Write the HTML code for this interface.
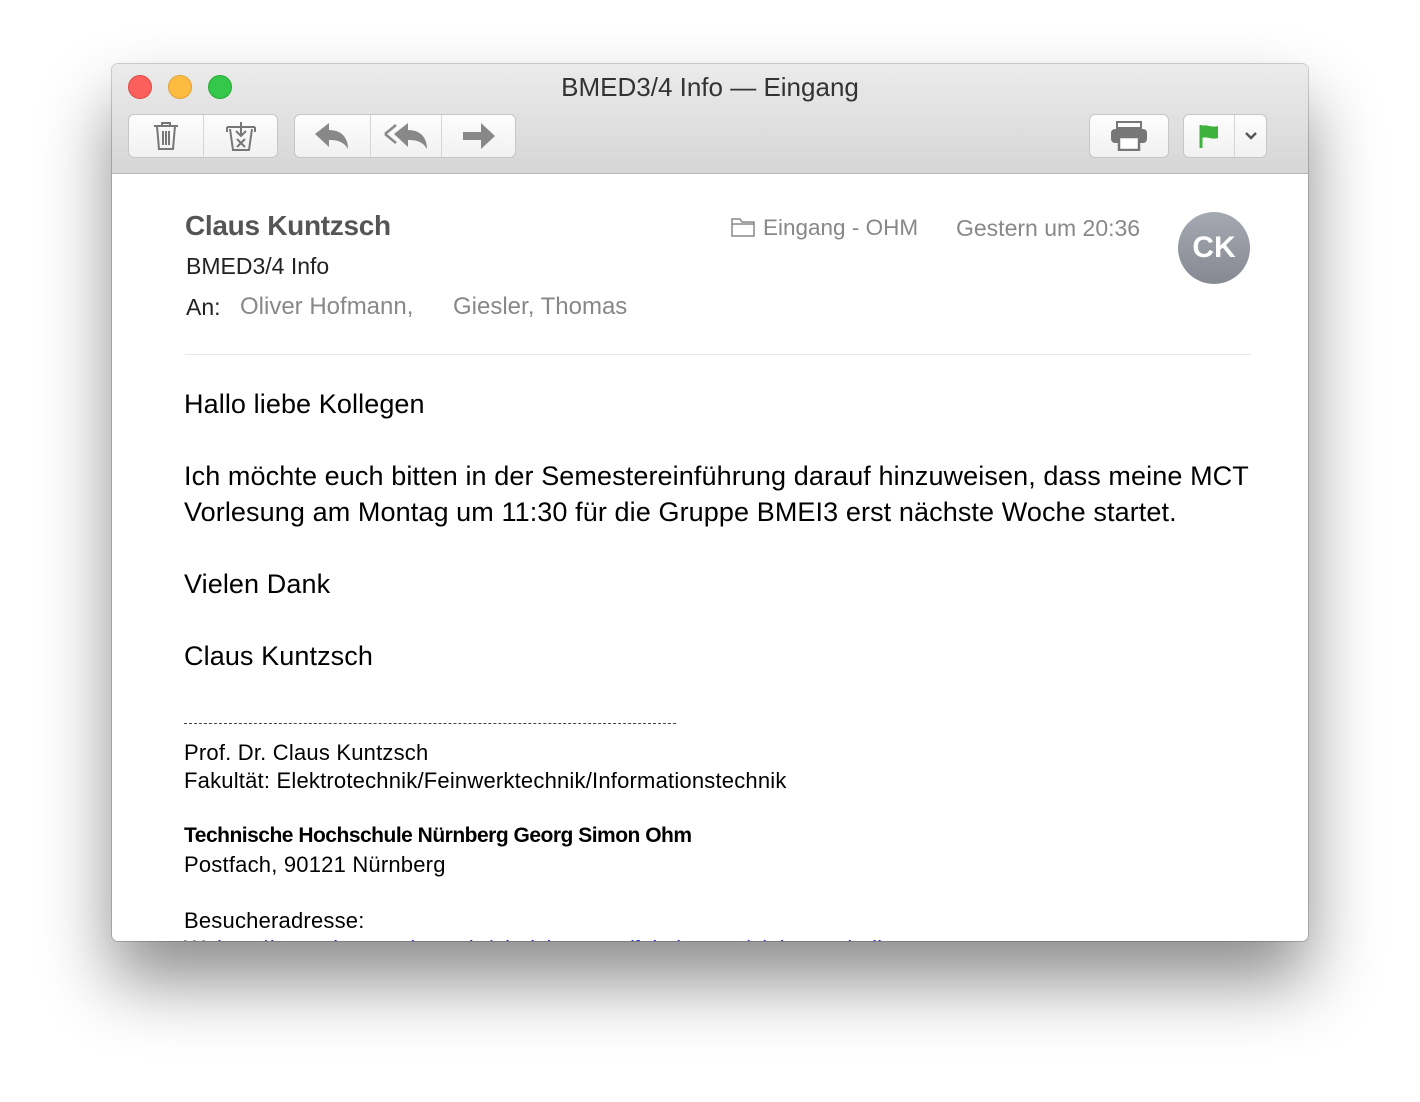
<!DOCTYPE html><html><head><meta charset="utf-8"><style>
body{margin:0;width:1420px;height:1102px;background:#fff;position:relative;overflow:hidden;font-family:"Liberation Sans",sans-serif}
.win{position:absolute;left:112px;top:64px;width:1196px;height:877px;border-radius:6px;overflow:hidden;background:#fff;box-shadow:0 40px 70px rgba(0,0,0,.45),0 0 0 1px rgba(0,0,0,.18)}
.tb{position:absolute;left:0;top:0;width:100%;height:109px;background:linear-gradient(#ebebeb,#d6d6d6);border-bottom:1px solid #b8b8b8}
.dot{position:absolute;top:11px;width:24px;height:24px;border-radius:50%}
.title{position:absolute;top:8px;left:0;width:100%;text-align:center;font-size:26px;color:#333;padding-left:0}
.grp{position:absolute;top:50px;height:44px;background:linear-gradient(#fdfdfd,#f1f1f1);border:1px solid #c6c6c6;border-radius:6px;display:flex;box-sizing:border-box}
.grp div{height:100%;display:flex;align-items:center;justify-content:center;border-right:1px solid #d6d6d6}
.grp div:last-child{border-right:none}
.t{position:absolute;white-space:nowrap}
.body{font-size:27px;color:#000;letter-spacing:0.1px}
.sig{font-size:22px;color:#000;letter-spacing:0.2px}
</style></head><body>
<div class="win">
<div class="tb">
<div class="dot" style="left:16px;background:#fc605c;border:1px solid #de4a45;box-sizing:border-box"></div>
<div class="dot" style="left:56px;background:#fdbc40;border:1px solid #dea236;box-sizing:border-box"></div>
<div class="dot" style="left:96px;background:#34c84a;border:1px solid #27aa35;box-sizing:border-box"></div>
<div class="title">BMED3/4 Info — Eingang</div>
<div class="grp" style="left:16px;width:150px"><div style="width:76px"><svg width="26" height="30" viewBox="0 0 26 30" fill="none" stroke="#777" stroke-width="2"><path d="M1 5h24M9 5V2h8v3M4 5l2 23h14l2-23M10 10v14M13 10v14M16 10v14"/></svg></div><div style="width:74px"><svg width="32" height="32" viewBox="0 0 32 32" fill="none" stroke="#777" stroke-width="2"><path d="M2 7h28M2 7v5M30 7v5M5 9l3 21h16l3-21M16 2v14M11 11l5 5 5-5M12 19l8 8M20 19l-8 8"/></svg></div></div>
<div class="grp" style="left:182px;width:222px"><div style="width:76px"><svg width="34" height="28" viewBox="0 0 34 28"><path d="M0 12L14 1v7c12 0 19 7 19 19c-4-7-10-9-19-9v7z" fill="#888"/></svg></div><div style="width:72px"><svg width="44" height="28" viewBox="0 0 44 28"><path d="M1 12L12 3" stroke="#888" stroke-width="2.5" fill="none"/><path d="M1 12L12 21" stroke="#888" stroke-width="2.5" fill="none"/><path d="M10 12L24 1v7c12 0 19 7 19 19c-4-7-10-9-19-9v7z" fill="#888"/></svg></div><div style="width:74px"><svg width="32" height="26" viewBox="0 0 32 26"><path d="M0 9h18V0l14 13-14 13v-9H0z" fill="#888"/></svg></div></div>
<div class="grp" style="left:977px;width:80px"><div style="width:80px"><svg width="38" height="30" viewBox="0 0 38 30"><rect x="7" y="1" width="24" height="6" fill="none" stroke="#777" stroke-width="2"/><rect x="1" y="8" width="36" height="14" rx="4" fill="#777"/><rect x="9" y="16" width="20" height="13" fill="#fff" stroke="#777" stroke-width="2.5"/></svg></div></div>
<div class="grp" style="left:1071px;width:84px"><div style="width:52px"><svg width="20" height="24" viewBox="0 0 20 24"><path d="M2 1v23" stroke="#3db33d" stroke-width="3"/><path d="M3 2c5-2 9 2 16 0v12c-7 2-11-2-16 0z" fill="#3db33d"/></svg></div><div style="width:32px"><svg width="14" height="10" viewBox="0 0 14 10"><path d="M2 2l5 5 5-5" stroke="#555" stroke-width="2.5" fill="none"/></svg></div></div>
</div>
<div class="t" style="left:73px;top:146px;font-size:28px;font-weight:bold;color:#555;letter-spacing:-0.3px">Claus Kuntzsch</div>
<div class="t" style="left:74px;top:189px;font-size:23px;color:#222">BMED3/4 Info</div>
<div class="t" style="left:74px;top:230px;font-size:23px;color:#222">An:</div>
<div class="t" style="left:128px;top:229px;font-size:24px;color:#888">Oliver Hofmann,</div>
<div class="t" style="left:341px;top:229px;font-size:24px;color:#888">Giesler, Thomas</div>
<svg class="t" style="left:619px;top:153px" width="24" height="20" viewBox="0 0 24 20" fill="none" stroke="#888" stroke-width="1.5"><path d="M1 2h8l2 3h12v14H1z M1 7h22"/></svg>
<div class="t" style="left:651px;top:151px;font-size:22.5px;color:#888">Eingang - OHM</div>
<div class="t" style="left:844px;top:151px;font-size:23px;color:#888">Gestern um 20:36</div>
<div class="t" style="left:1066px;top:148px;width:72px;height:72px;border-radius:50%;background:linear-gradient(#a6a9b1,#868992);color:#fff;font-size:30px;font-weight:bold;display:flex;align-items:center;justify-content:center">CK</div>
<div class="t" style="left:73px;top:290px;width:1066px;height:1px;background:#e6e6e6"></div>
<div class="t body" style="left:72px;top:325px">Hallo liebe Kollegen</div>
<div class="t body" style="left:72px;top:397px">Ich möchte euch bitten in der Semestereinführung darauf hinzuweisen, dass meine MCT</div>
<div class="t body" style="left:72px;top:433px">Vorlesung am Montag um 11:30 für die Gruppe BMEI3 erst nächste Woche startet.</div>
<div class="t body" style="left:72px;top:505px">Vielen Dank</div>
<div class="t body" style="left:72px;top:577px">Claus Kuntzsch</div>
<div class="t" style="left:72px;top:659px;width:492px;border-top:1px dashed #444;height:0"></div>
<div class="t sig" style="left:72px;top:676px">Prof. Dr. Claus Kuntzsch</div>
<div class="t sig" style="left:72px;top:704px">Fakultät: Elektrotechnik/Feinwerktechnik/Informationstechnik</div>
<div class="t sig" style="left:72px;top:760px;font-weight:bold;font-size:21px;letter-spacing:-0.5px">Technische Hochschule Nürnberg Georg Simon Ohm</div>
<div class="t sig" style="left:72px;top:788px">Postfach, 90121 Nürnberg</div>
<div class="t sig" style="left:72px;top:844px">Besucheradresse:</div>
<div class="t sig" style="left:72px;top:872px">We<span style="color:#1a1aee">http://www.th-nuernberg.de/einrichtungen/fakultaeten/elektrotechnik</span></div>
</div>
</body></html>
